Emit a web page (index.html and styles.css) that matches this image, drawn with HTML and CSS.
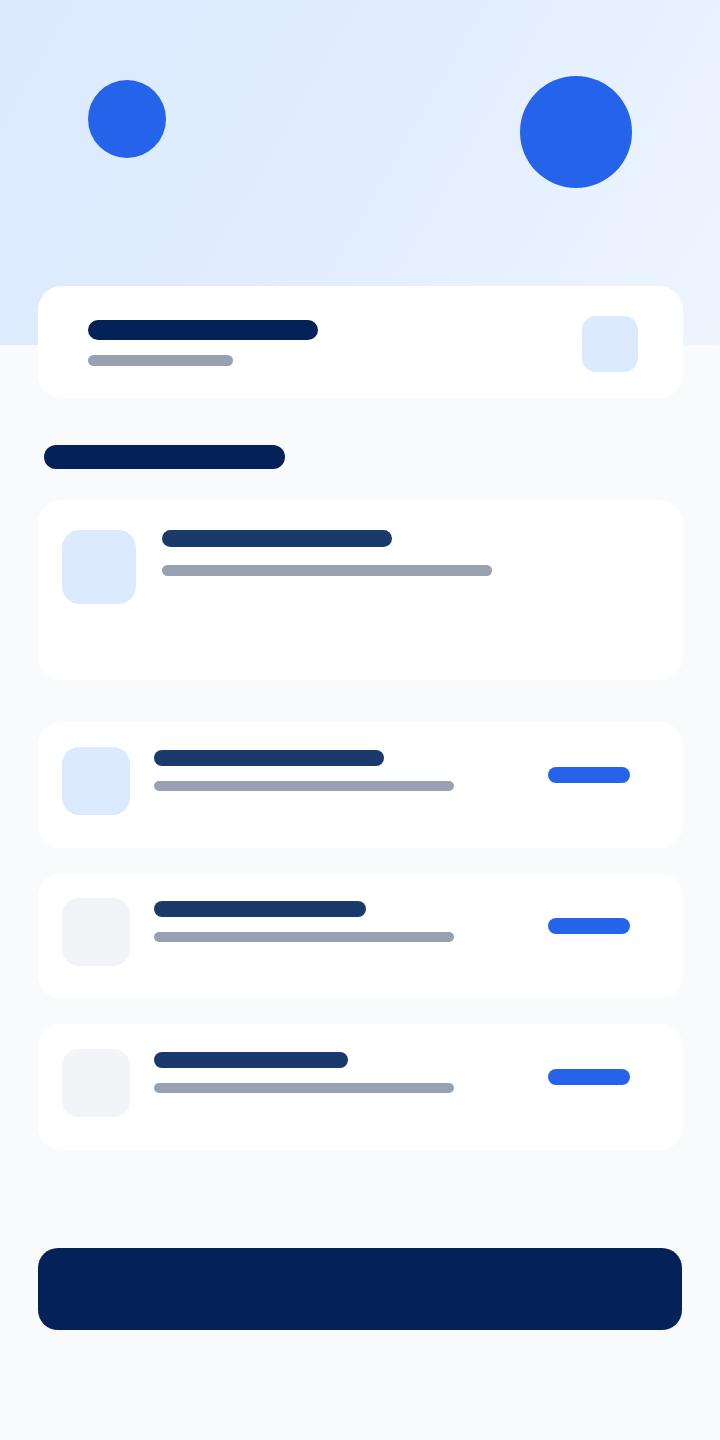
FILE: index.html
```html
<!DOCTYPE html>
<html lang="en">
<head>
<meta charset="utf-8">
<title>Skeleton</title>
<link rel="stylesheet" href="styles.css">
</head>
<body>
<div class="hero">
  <div class="dot dot-sm"></div>
  <div class="dot dot-lg"></div>
</div>
<div class="head-card">
  <div class="head-text">
    <div class="bar bar-title"></div>
    <div class="bar bar-sub"></div>
  </div>
  <div class="head-icon"></div>
</div>
<div class="bar section-title"></div>
<div class="card card-feature">
  <div class="feature-icon"></div>
  <div class="feature-text">
    <div class="bar feature-title"></div>
    <div class="bar feature-sub"></div>
  </div>
</div>
<div class="list">
  <div class="card row">
    <div class="row-icon row-icon-blue"></div>
    <div class="row-text">
      <div class="bar row-title w230"></div>
      <div class="bar row-sub"></div>
    </div>
    <div class="pill"></div>
  </div>
  <div class="card row">
    <div class="row-icon"></div>
    <div class="row-text">
      <div class="bar row-title w212"></div>
      <div class="bar row-sub"></div>
    </div>
    <div class="pill"></div>
  </div>
  <div class="card row">
    <div class="row-icon"></div>
    <div class="row-text">
      <div class="bar row-title w194"></div>
      <div class="bar row-sub"></div>
    </div>
    <div class="pill"></div>
  </div>
</div>
<div class="cta"></div>
</body>
</html>
```

FILE: styles.css
```css
* { box-sizing: border-box; }
html, body { margin: 0; padding: 0; }
body {
  background: #f8fafc;
  width: 720px;
  min-height: 1440px;
  font-family: "Inter", "Liberation Sans", sans-serif;
}
.hero {
  height: 345px;
  background: linear-gradient(120deg, #dbeafe 0%, #e2edfe 50%, #eef5ff 100%);
  display: flex;
  justify-content: space-between;
  align-items: flex-start;
  padding: 76px 88px 0 88px;
}
.dot { background: #2563eb; border-radius: 50%; }
.dot-sm { width: 78px; height: 78px; margin-top: 4px; }
.dot-lg { width: 112px; height: 112px; }

.bar { border-radius: 999px; }

.head-card {
  margin: -59px 37px 0 38px;
  height: 112px;
  background: #ffffff;
  border-radius: 24px;
  display: flex;
  align-items: flex-start;
  justify-content: space-between;
  padding: 34px 45px 0 50px;
}
.head-text { display: flex; flex-direction: column; gap: 15px; }
.bar-title { width: 230px; height: 20px; background: #042159; }
.bar-sub { width: 145px; height: 11px; background: #97a1b2; }
.head-icon {
  width: 56px; height: 56px;
  margin-top: -4px;
  border-radius: 14px;
  background: #dbeafe;
}

.section-title {
  margin: 47px 0 0 44px;
  width: 241px; height: 24px;
  background: #042159;
}

.card {
  background: #ffffff;
  border-radius: 24px;
  margin-left: 38px;
  margin-right: 37px;
}
.card-feature {
  margin-top: 31px;
  height: 180px;
  display: flex;
  align-items: flex-start;
  padding: 30px 24px 0 24px;
  gap: 26px;
}
.feature-icon {
  width: 74px; height: 74px;
  border-radius: 18px;
  background: #dbeafe;
}
.feature-text { display: flex; flex-direction: column; gap: 18px; }
.feature-title { width: 230px; height: 17px; background: #1a3a6b; }
.feature-sub { width: 330px; height: 11px; background: #97a1b2; }

.list {
  margin-top: 42px;
  display: flex;
  flex-direction: column;
  gap: 25px;
}
.row {
  height: 126px;
  display: flex;
  align-items: flex-start;
  padding: 25px 53px 0 24px;
}
.row-icon {
  width: 68px; height: 68px;
  border-radius: 17px;
  background: #f2f4f8;
}
.row-icon-blue { background: #dbeafe; }
.row-text {
  margin: 3px 0 0 24px;
  display: flex;
  flex-direction: column;
  gap: 15px;
}
.row-title { height: 16px; background: #1a3a6b; }
.w230 { width: 230px; }
.w212 { width: 212px; }
.w194 { width: 194px; }
.row-sub { width: 300px; height: 10px; background: #97a1b2; }
.pill {
  margin: 20px 0 0 auto;
  width: 82px; height: 16px;
  border-radius: 999px;
  background: #2563eb;
}

.cta {
  margin: 98px 38px 0 38px;
  height: 82px;
  border-radius: 20px;
  background: #042159;
}
```
